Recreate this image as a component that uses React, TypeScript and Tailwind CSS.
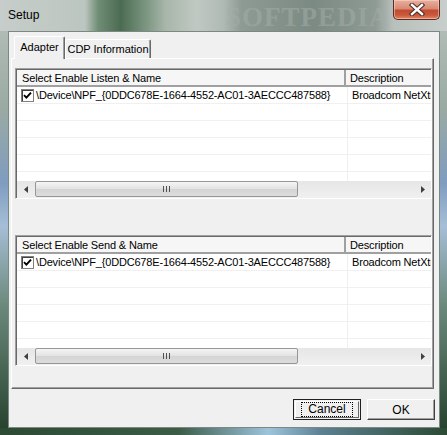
import React from "react";

const font = { fontFamily: '"Liberation Sans", Arial, sans-serif' };

function Checkbox() {
  return (
    <div className="w-[13px] h-[13px] border border-[#808080] bg-white shadow-[inset_1px_1px_0_#404040] flex items-center justify-center shrink-0">
      <svg width="9" height="9" viewBox="0 0 9 9">
        <path d="M1 4.2 L3.4 6.6 L8 1.6" stroke="#000" strokeWidth="1.9" fill="none" />
      </svg>
    </div>
  );
}

function ScrollBar() {
  return (
    <div className="h-[17px] flex bg-[linear-gradient(to_bottom,#e6e6e6,#f0f0f0)] shrink-0">
      <div className="w-[17px] h-[17px] flex items-center justify-center">
        <svg width="4" height="7" viewBox="0 0 4 7">
          <path d="M4 0 L0 3.5 L4 7 Z" fill="#404040" />
        </svg>
      </div>
      <div className="w-[263px] h-[16px] ml-[1px] rounded-[2px] border border-[#979797] bg-[linear-gradient(to_bottom,#f5f5f5,#e2e2e2_50%,#d4d4d4_51%,#dcdcdc)] flex items-center justify-center gap-[2px]">
        <div className="w-[1px] h-[6px] bg-[#505050]" />
        <div className="w-[1px] h-[6px] bg-[#505050]" />
        <div className="w-[1px] h-[6px] bg-[#505050]" />
      </div>
      <div className="flex-1" />
      <div className="w-[17px] h-[17px] flex items-center justify-center">
        <svg width="4" height="7" viewBox="0 0 4 7">
          <path d="M0 0 L4 3.5 L0 7 Z" fill="#404040" />
        </svg>
      </div>
    </div>
  );
}

function ListView({ title }: { title: string }) {
  return (
    <div className="w-[417px] h-[131px] border border-[#a0a0a0] border-r-white border-b-white shadow-[inset_1px_1px_0_#696969] bg-white flex flex-col overflow-hidden pl-[1px] pt-[1px]">
      <div className="flex h-[17px] shrink-0 bg-[#f6f6f6] border-b-[2px] border-b-[#a0a0a0] text-[11px] tracking-[-0.15px] text-black leading-[15px]">
        <div className="w-[329px] pl-[5px] pt-[1px] border-r-[2px] border-r-[#a0a0a0]">{title}</div>
        <div className="flex-1 pl-[4px] pt-[1px] whitespace-nowrap">Description</div>
      </div>
      <div className="flex-1 overflow-hidden flex flex-col">
        <div className="flex h-[17px] shrink-0 border-b border-[#f0f0f0] text-[11px] tracking-[-0.18px] text-black leading-[17px]">
          <div className="w-[331px] flex items-center pl-[4px] gap-[1px] border-r border-[#f0f0f0] whitespace-nowrap">
            <Checkbox />
            <span className="ml-[1px]">\Device\NPF_{"{"}0DDC678E-1664-4552-AC01-3AECCC487588{"}"}</span>
          </div>
          <div className="flex-1 pl-[4px] whitespace-nowrap overflow-hidden">Broadcom NetXtreme</div>
        </div>
        {[0, 1, 2, 3, 4].map((i) => (
          <div key={i} className="flex h-[17px] shrink-0 border-b border-[#f0f0f0]">
            <div className="w-[331px] border-r border-[#f0f0f0]" />
            <div className="flex-1" />
          </div>
        ))}
      </div>
      <ScrollBar />
    </div>
  );
}

export default function App() {
  return (
    <div
      style={font}
      className="w-[447px] h-[435px] relative overflow-hidden flex flex-col bg-[linear-gradient(to_bottom,#b8c2bc_0%,#9aaaa2_25%,#7f9cc0_42%,#a6bed6_52%,#6c8a7c_70%,#24402c_100%)]"
    >
      {/* title bar */}
      <div className="h-[31px] shrink-0 relative bg-[linear-gradient(to_right,#c6cdca_0%,#bcc6c0_19%,#6f8c74_22%,#4c6c52_27%,#7e9884_33%,#a8b6aa_37%,#c0c8c2_44%,#b0bab4_50%,#8e9a94_54%,#7c8a84_70%,#8e9a94_84%,#b8c0bc_88%,#c8cecb_100%)]">
        <div className="absolute left-[226px] top-[2px] text-[27px] font-bold tracking-[1px] text-[#a4aea8] opacity-50 leading-[30px]" style={{ fontFamily: '"Liberation Serif", serif' }}>
          SOFTPEDIA
        </div>
        <div className="absolute left-[8px] top-[8px] text-[12px] leading-[14px] text-black">Setup</div>
        <div className="absolute left-[393px] top-0 w-[47px] h-[20px] rounded-b-[5px] border border-t-0 border-[#5e2a22] bg-[linear-gradient(to_bottom,#e8b0a0_0%,#d98a74_45%,#c44a30_55%,#c85a3c_80%,#e08a68_100%)] shadow-[inset_0_0_0_1px_rgba(255,220,210,0.5)] flex items-center justify-center">
          <svg width="16" height="13" viewBox="0 0 16 13">
            <path d="M3 2 L13 11 M13 2 L3 11" stroke="#4a2a26" strokeWidth="4.4" strokeLinecap="square" />
            <path d="M3 2 L13 11 M13 2 L3 11" stroke="#ffffff" strokeWidth="2.4" strokeLinecap="square" />
          </svg>
        </div>
      </div>

      {/* client area */}
      <div className="ml-[8px] w-[432px] h-[397px] shrink-0 bg-[#f0f0f0] border border-[#7c8884] flex flex-col">
        {/* tabs */}
        <div className="h-[26px] shrink-0 flex items-end pl-[5px] pt-[3px] relative z-10">
          <div className="w-[51px] h-[23px] mb-[-1px] bg-[#f0f0f0] border border-b-0 border-white border-r-[#696969] shadow-[inset_-1px_0_0_#a0a0a0] rounded-t-[2px] text-[11px] text-black flex items-start justify-center pt-[3px] leading-[14px]">
            Adapter
          </div>
          <div className="w-[86px] h-[19px] bg-[#f0f0f0] border border-b-0 border-white border-r-[#696969] shadow-[inset_-1px_0_0_#a0a0a0] rounded-t-[2px] text-[11px] text-black flex items-start justify-center pt-[2px] leading-[14px]">
            CDP Information
          </div>
        </div>
        {/* panel */}
        <div className="ml-[2px] w-[423px] h-[331px] shrink-0 border border-white border-r-[#696969] border-b-[#696969] shadow-[inset_-1px_-1px_0_#a0a0a0] flex flex-col pl-[3px] pt-[9px] gap-[36px]">
          <ListView title="Select Enable Listen & Name" />
          <ListView title="Select Enable Send & Name" />
        </div>
        {/* buttons */}
        <div className="flex justify-end gap-[6px] mt-[10px] pr-[4px]">
          <div className="w-[68px] h-[21px] border border-[#202020] bg-[#f0f0f0] p-[1px]">
            <div className="w-full h-full border border-white border-r-[#696969] border-b-[#696969] flex items-center justify-center">
              <div className="border border-dotted border-black px-[6px] text-[12px] leading-[13px] text-black">Cancel</div>
            </div>
          </div>
          <div className="w-[68px] h-[21px] border border-white border-r-[#404040] border-b-[#404040] shadow-[inset_-1px_-1px_0_#a0a0a0] bg-[#f0f0f0] flex items-center justify-center text-[12px] text-black">
            OK
          </div>
        </div>
      </div>

      {/* bottom frame */}
      <div className="flex-1 bg-[linear-gradient(to_right,#2c4a34_0%,#3c5c48_40%,#9ec4dc_60%,#5c8090_72%,#2c4a34_100%)]" />
    </div>
  );
}
